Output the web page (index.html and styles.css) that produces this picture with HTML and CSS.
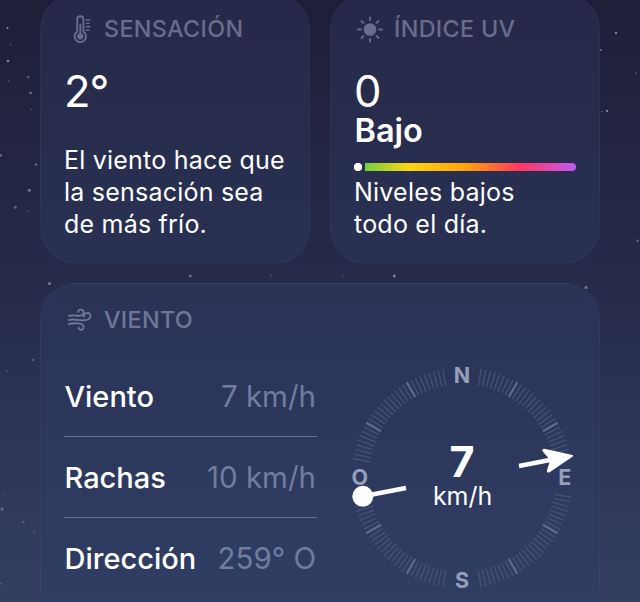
FILE: index.html
```html
<!DOCTYPE html>
<html lang="es">
<head>
<meta charset="utf-8">
<title>El tiempo</title>
<link rel="stylesheet" href="styles.css">
</head>
<body>
<svg class="stars" width="640" height="602" viewBox="0 0 640 602" aria-hidden="true" id="stars"></svg>
<main class="cards">
  <section class="card">
    <h2 class="card-title">
      <svg class="icon" width="30" height="30" viewBox="0 0 30 30">
        <path d="M13.2 17.6V5.4a3.1 3.1 0 0 1 6.2 0v12.2a5.7 5.7 0 1 1-6.2 0z" fill="none" stroke="currentColor" stroke-width="1.9"/>
        <circle cx="16.3" cy="22.3" r="3.1" fill="currentColor"/>
        <path d="M16.3 21V10.5" stroke="currentColor" stroke-width="1.8" stroke-linecap="round"/>
        <path d="M22.3 6h3.6M22.3 9.4h2.8M22.3 12.8h3.6M22.3 16.2h2.8" stroke="currentColor" stroke-width="1.4" stroke-linecap="round"/>
      </svg>
      <span>SENSACIÓN</span>
    </h2>
    <div class="reading">2°</div>
    <p class="note note-feels">El viento hace que<br>la sensación sea<br>de más frío.</p>
  </section>

  <section class="card">
    <h2 class="card-title">
      <svg class="icon" width="30" height="30" viewBox="0 0 30 30">
        <circle cx="16" cy="15.5" r="6.3" fill="currentColor"/>
        <path d="M16 3.5v2.6M16 24.9v2.6M4 15.5h2.8M25.2 15.5H28M7.5 7l1.9 1.9M22.6 22.1l1.9 1.9M24.5 7l-1.9 1.9M9.4 22.1L7.5 24" stroke="currentColor" stroke-width="1.9" stroke-linecap="round"/>
      </svg>
      <span>ÍNDICE UV</span>
    </h2>
    <div class="reading">0</div>
    <div class="level">Bajo</div>
    <div class="scale"><span class="scale-dot"></span></div>
    <p class="note note-uv">Niveles bajos<br>todo el día.</p>
  </section>

  <section class="card card-wind">
    <h2 class="card-title">
      <svg class="icon" width="30" height="30" viewBox="0 0 30 30" fill="none" stroke="currentColor" stroke-width="1.8" stroke-linecap="round">
        <path d="M4.8 11.9c4.5-1.5 7.8.4 11.8-.3 4.2-.8 3.9-6 .2-6-1.8 0-2.8 1.2-2.6 2.6"/>
        <path d="M4.8 16c4.8-1.6 9 .8 16.2.2 6.9-.6 7-7.2 2.3-7.2-2.6 0-4.1 2-3.3 4"/>
        <path d="M4.8 20.2c5.5-1.7 7.8-.8 11-.5 4.8.5 4.7 6.1 1.3 6.1-1.7 0-2.6-1-2.5-2.3"/>
      </svg>
      <span>VIENTO</span>
    </h2>
    <div class="wind">
      <dl class="rows">
        <div class="row"><dt>Viento</dt><dd>7 km/h</dd></div>
        <div class="row"><dt>Rachas</dt><dd>10 km/h</dd></div>
        <div class="row"><dt>Dirección</dt><dd>259° O</dd></div>
      </dl>
      <svg class="compass" width="230" height="230" viewBox="-115 -115 230 230">
        <g id="ticks"></g>
        <text class="cardinal" x="0" y="-95">N</text>
        <text class="cardinal" x="102.7" y="7">E</text>
        <text class="cardinal" x="0" y="110">S</text>
        <text class="cardinal" x="-102.3" y="7">O</text>
        <g fill="#fff">
          <path d="M-99 18.3L-56 10" stroke="#fff" stroke-width="4.6"/>
          <circle cx="-99.2" cy="18.3" r="10.5"/>
          <path d="M57 -12L93 -19" stroke="#fff" stroke-width="4.6"/>
          <path d="M110.3 -22.2L82.2 -28.4Q80.6 -28.5 81.4 -27L89 -18.3L85.8 -7.5Q85.4 -5.6 87.2 -6.5Z" stroke="#fff" stroke-width="1.6" stroke-linejoin="round"/>
        </g>
        <text class="speed" x="0" y="-1">7</text>
        <text class="unit" x="0.6" y="26.7">km/h</text>
      </svg>
    </div>
  </section>
</main>
<script src="script.js"></script>
</body>
</html>
```
FILE: styles.css
```css
* {
  box-sizing: border-box;
}

html {
  overflow: hidden;
}

body {
  margin: 0;
  height: 602px;
  overflow: hidden;
  color: #fff;
  font-family: Inter, "Liberation Sans", sans-serif;
  background: linear-gradient(#1e1e39 0, #272c4b 50%, #343f61 100%);
}

.stars {
  position: absolute;
  left: 0;
  top: 0;
}

.stars circle {
  fill: #a5abc8;
}

.cards {
  position: relative;
  display: grid;
  grid-template-columns: 270px 270px;
  grid-template-rows: 270px 344px;
  gap: 19px 20px;
  margin: -6px 0 0 40px;
}

.card {
  padding: 18.5px 23px 0;
  border: 1px solid rgba(120, 130, 180, 0.08);
  border-radius: 36px;
  background: linear-gradient(#262849, #293152);
}

.card-wind {
  grid-column: span 2;
  padding-top: 20px;
  background: linear-gradient(#2a3256, #303e64 330px);
}

.card-title {
  display: flex;
  align-items: center;
  gap: 10px;
  height: 30px;
  margin: 0;
  color: #686c8d;
  font-size: 23.3px;
  font-weight: 500;
  letter-spacing: 0.35px;
}

.card-wind .card-title {
  color: #6d7899;
}

.icon {
  flex: none;
}

.reading {
  height: 44px;
  margin-top: 25px;
  font-size: 43.5px;
  line-height: 44px;
  letter-spacing: -1px;
}

.level {
  height: 34px;
  padding-left: 0.5px;
  font-size: 32.5px;
  font-weight: 600;
  line-height: 36px;
}

.scale {
  width: 222px;
  height: 8px;
  margin-top: 16.5px;
  border-radius: 4px;
  background: linear-gradient(90deg, #4fcf4a 0, #ffd60f 25%, #ff9f0a 51%, #ff375f 75%, #bf5af2 100%);
}

.scale-dot {
  display: block;
  box-sizing: content-box;
  width: 8px;
  height: 8px;
  border: solid #29304f;
  border-width: 0 3px 0 0;
  background: radial-gradient(circle at 4px 4px, #fff 3.9px, #29304f 4.5px);
}

.note {
  margin: 0;
  font-size: 25px;
  line-height: 32px;
  letter-spacing: 0.22px;
  white-space: nowrap;
}

.note-feels {
  margin-top: 31px;
}

.note-uv {
  margin-top: 4.5px;
}

.wind {
  display: grid;
  grid-template-columns: 253px 230px;
  gap: 30px;
}

.rows {
  margin: 22px 0 0;
}

.row {
  display: flex;
  justify-content: space-between;
  align-items: center;
  height: 81px;
  padding-left: 0.5px;
  border-bottom: 1px solid #65708f;
  font-size: 29px;
}

.row:last-child {
  border-bottom-color: transparent;
}

.row dt {
  font-weight: 500;
}

.row dd {
  margin: 0 1px 0 0;
  color: #707ca1;
  font-size: 29.5px;
}

.compass {
  margin-top: 29px;
  overflow: visible;
}

.compass text {
  fill: #fff;
  text-anchor: middle;
}

.compass .cardinal {
  fill: #969fba;
  font-size: 21.5px;
  font-weight: 700;
}

.compass .speed {
  font-size: 43px;
  font-weight: 700;
}

.compass .unit {
  font-size: 25px;
}

.tick {
  stroke: #455173;
  stroke-width: 1.4;
}

.tick-major {
  stroke: #5f6b8c;
  stroke-width: 2.2;
}
```
FILE: script.js
```js
const NS = "http://www.w3.org/2000/svg";

// x, y, radius, opacity
const stars = [
  [7.5, 28, 1, 0.8], [10.5, 44.5, 1, 0.3], [8, 61, 1.2, 0.8], [8.5, 81, 0.9, 0.3],
  [28.3, 77, 1.2, 0.5], [30.5, 93, 1.3, 0.6], [31.3, 109.3, 0.9, 0.35],
  [616, 33, 1.2, 0.7], [601, 50, 1, 0.6], [636, 73, 1.1, 0.3],
  [607, 111, 1.2, 0.7], [602, 111.5, 0.8, 0.5],
  [0.5, 155.5, 1.4, 0.5], [36, 164.5, 1.3, 0.5], [29.3, 190.3, 1.5, 0.6],
  [15.3, 207.3, 1.5, 0.45], [28, 211, 1, 0.25], [49.5, 283.5, 1.6, 0.6],
  [190.3, 276, 1.5, 0.5], [271, 275.5, 1, 0.3], [342.5, 276.5, 1, 0.3],
  [394.3, 276, 1.4, 0.7], [586, 287.5, 1.5, 0.6], [637.5, 240.8, 1.2, 0.5],
  [509, 263.3, 1, 0.4], [33, 360, 1.2, 0.4], [7.5, 371, 1, 0.3],
  [5, 495, 0.9, 0.2], [2, 509, 1.4, 0.5], [23.5, 522, 1.2, 0.35],
  [34, 532.5, 1, 0.3], [1, 583.5, 1, 0.3]
];

function add(parent, name, attrs) {
  const el = document.createElementNS(NS, name);
  for (const key in attrs) el.setAttribute(key, attrs[key]);
  parent.appendChild(el);
}

for (const [cx, cy, r, opacity] of stars) {
  add(document.getElementById("stars"), "circle", { cx, cy, r, opacity });
}

// Ticks every 2.5 degrees, leaving a gap at each cardinal letter
for (let quarter = 0; quarter < 360; quarter += 90) {
  for (let a = 10; a <= 80; a += 2.5) {
    add(document.getElementById("ticks"), "line", {
      x1: 0, x2: 0, y1: -93.5, y2: -110.5,
      transform: `rotate(${quarter + a})`,
      class: a % 30 === 0 ? "tick tick-major" : "tick"
    });
  }
}
```
